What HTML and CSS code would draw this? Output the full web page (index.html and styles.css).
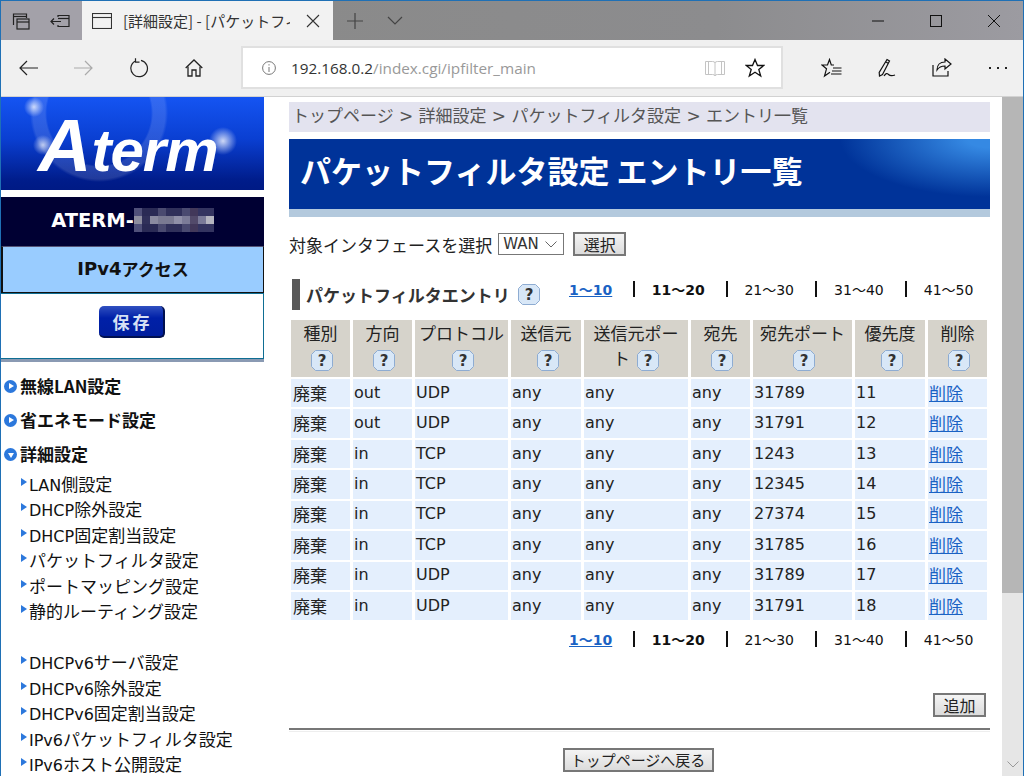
FILE: index.html
```html
<!DOCTYPE html>
<html lang="ja">
<head>
    <meta charset="UTF-8">
    <title>[詳細設定] - [パケットフィルタ設定 エントリ一覧]</title>
    <link rel="stylesheet" href="styles.css">
</head>
<body>
    <svg class="defs" width="0" height="0">
        <symbol id="help" viewBox="0 0 22 21">
            <path d="M4.500 .5h13l4 4v12l-4 4h-13l-4-4v-12z" fill="#d8e7f7" stroke="#8eacd2"/>
            <text x="11" y="16" text-anchor="middle" font-family="DejaVu Sans" font-weight="700" font-size="15" fill="#333">?</text>
        </symbol>
    </svg>
    <div class="window">
        <div class="titlebar">
            <div class="tab-tools">
                <svg class="ico" width="20" height="20" viewBox="0 0 20 20" fill="none" stroke="#222" stroke-width="1.2"><path d="M2.500 14V3h13v4"/><path d="M2.500 5.500h13"/><rect x="6" y="8" width="12" height="10"/><path d="M6 11h12"/></svg>
                <svg class="ico tool-gap" width="20" height="20" viewBox="0 0 20 20" fill="none" stroke="#222" stroke-width="1.2"><path d="M8 6V4.500h11v11H8V14"/><path d="M8 7.500h11"/><path d="M1 10.500h10M4 7.500l-3 3 3 3"/></svg>
            </div>
            <div class="tab">
                <svg width="20" height="16" viewBox="0 0 20 16" fill="none" stroke="#333" stroke-width="1.100"><rect x=".5" y=".5" width="19" height="15"/><path d="M.5 4.500h19"/></svg>
                <span class="tab-title">[詳細設定] - [パケットフィルタ設定 エントリ一覧]</span>
                <svg width="14" height="14" viewBox="0 0 14 14" stroke="#333" stroke-width="1.100"><path d="M1 1l12 12M13 1L1 13"/></svg>
            </div>
            <svg class="new-tab" width="16" height="16" viewBox="0 0 16 16" stroke="#444" stroke-width="1.200"><path d="M8 0v16M0 8h16"/></svg>
            <svg class="tab-menu" width="16" height="10" viewBox="0 0 16 10" fill="none" stroke="#444" stroke-width="1.200"><path d="M1 1l7 7 7-7"/></svg>
            <div class="win-controls">
                <svg width="12" height="2" viewBox="0 0 12 2" stroke="#111"><path d="M0 1h12"/></svg>
                <svg width="12" height="12" viewBox="0 0 12 12" fill="none" stroke="#111"><rect x=".5" y=".5" width="11" height="11"/></svg>
                <svg width="12" height="12" viewBox="0 0 12 12" stroke="#111"><path d="M0 0l12 12M12 0L0 12"/></svg>
            </div>
        </div>
        <div class="toolbar">
            <svg class="nav-back" width="20" height="16" viewBox="0 0 20 16" fill="none" stroke="#222" stroke-width="1.200"><path d="M19 8H1M8 1L1 8l7 7"/></svg>
            <svg class="nav-fwd" width="20" height="16" viewBox="0 0 20 16" fill="none" stroke="#aaa" stroke-width="1.200"><path d="M1 8h18M12 1l7 7-7 7"/></svg>
            <svg class="nav-reload" width="20" height="20" viewBox="0 0 20 20" fill="none" stroke="#222" stroke-width="1.200"><path d="M6 3.200a8.300 8.300 0 1 0 6-.9"/><path d="M6.500 .2v4h4"/></svg>
            <svg class="nav-home" width="18" height="18" viewBox="0 0 18 18" fill="none" stroke="#222" stroke-width="1.300"><path d="M.7 9L9 1l8.300 8"/><path d="M3 7.500V17h4v-6h4v6h4V7.500"/></svg>
            <div class="address">
                <svg width="14" height="14" viewBox="0 0 14 14" fill="none" stroke="#777"><circle cx="7" cy="7" r="6.400"/><path d="M7 6v5M7 3.200v1.300"/></svg>
                <span class="url">192.168.0.2<span class="url-path">/index.cgi/ipfilter_main</span></span>
                <svg class="read" width="20" height="18" viewBox="0 0 20 18" fill="none" stroke="#c4c4c4"><path d="M.5 2.500h7q2.500 0 2.500 1.500 0-1.500 2.500-1.500h7v13h-7q-2.500 0-2.500 1.500 0-1.500-2.500-1.500h-7zM10 4v13"/><path d="M3.500 2.500v13M16.500 2.500v13"/></svg>
                <svg class="star" width="20" height="20" viewBox="0 0 20 20" fill="none" stroke="#111" stroke-width="1.300"><path d="M10 1.500l2.500 6h6.300l-5 4 1.900 6.500-5.700-3.800L4.300 18l1.900-6.500-5-4h6.300z"/></svg>
            </div>
            <svg class="hub" width="21" height="20" viewBox="0 0 21 20" fill="none" stroke="#111" stroke-width="1.200"><path d="M13 7h-2.700L8.500 1.500 6.500 7H1l4.500 3.800L3.500 18l5.500-3.800"/><path d="M12 10h8.500M11 13h9.500M10 16h10.500"/></svg>
            <svg class="pen" width="19" height="20" viewBox="0 0 19 20" fill="none" stroke="#111" stroke-width="1.200"><path d="M10 1.500l2.500 1.500-7 13.500-3 1.500-.3-3.500zM9 4l2.500 1.500"/><path d="M7 18c2-3 3-3 4.500-1.500s3 1.800 6.500.5"/></svg>
            <svg class="share" width="20" height="19" viewBox="0 0 20 19" fill="none" stroke="#111" stroke-width="1.200"><path d="M1 7v11h15v-5"/><path d="M13 1l6 5-6 5V8c-4 0-6 1-8 4 0-5 3-8 8-8z"/></svg>
            <div class="dots"><i></i><i></i><i></i></div>
        </div>
        <div class="viewport">
            <div class="page">
                <div class="sidebar">
                    <div class="logo"><span class="logo-text"><span class="logo-a">A</span><span class="logo-rest">term</span></span></div>
                    <div class="host"><span class="lat-b">ATERM-</span><span class="mosaic"></span></div>
                    <div class="mode"><span class="lat-m">IPv4</span>アクセス</div>
                    <div class="save-box"><span class="save-btn">保存</span></div>
                    <ul class="menu">
                        <li class="menu-top"><span class="dot dot-right"></span>無線LAN設定</li>
                        <li class="menu-top"><span class="dot dot-right"></span>省エネモード設定</li>
                        <li class="menu-top"><span class="dot dot-down"></span>詳細設定</li>
                    </ul>
                    <ul class="submenu">
                        <li><span class="lat">LAN</span>側設定</li>
                        <li><span class="lat">DHCP</span>除外設定</li>
                        <li><span class="lat">DHCP</span>固定割当設定</li>
                        <li>パケットフィルタ設定</li>
                        <li>ポートマッピング設定</li>
                        <li>静的ルーティング設定</li>
                        <li class="blank"></li>
                        <li><span class="lat">DHCPv6</span>サーバ設定</li>
                        <li><span class="lat">DHCPv6</span>除外設定</li>
                        <li><span class="lat">DHCPv6</span>固定割当設定</li>
                        <li><span class="lat">IPv6</span>パケットフィルタ設定</li>
                        <li><span class="lat">IPv6</span>ホスト公開設定</li>
                    </ul>
                </div>
                <div class="main">
                    <div class="crumbs">トップページ <span class="sep">&gt;</span> 詳細設定 <span class="sep">&gt;</span> パケットフィルタ設定 <span class="sep">&gt;</span> エントリ一覧</div>
                    <h1>パケットフィルタ設定 エントリ一覧</h1>
                    <div class="if-row">
                        対象インタフェースを選択
                        <span class="select"><span class="lat-s">WAN</span><svg width="12" height="7" viewBox="0 0 12 7" fill="none" stroke="#666"><path d="M.5 .5L6 6 11.500 .5"/></svg></span>
                        <span class="btn btn-pick">選択</span>
                    </div>
                    <div class="section-row">
                        <h2>パケットフィルタエントリ <svg class="help" width="22" height="21"><use href="#help"/></svg></h2>
                        <div class="pager">
                            <a href="#">1～10</a><i></i><b>11～20</b><i></i><span>21～30</span><i></i><span>31～40</span><i></i><span>41～50</span>
                        </div>
                    </div>
                    <table class="entries">
                        <colgroup>
                            <col class="c1"><col class="c2"><col class="c3"><col class="c4"><col class="c5"><col class="c6"><col class="c7"><col class="c8"><col class="c9">
                        </colgroup>
                        <thead>
                            <tr>
                                <th>種別<br><svg class="help" width="22" height="21"><use href="#help"/></svg></th>
                                <th>方向<br><svg class="help" width="22" height="21"><use href="#help"/></svg></th>
                                <th>プロトコル<br><svg class="help" width="22" height="21"><use href="#help"/></svg></th>
                                <th>送信元<br><svg class="help" width="22" height="21"><use href="#help"/></svg></th>
                                <th>送信元ポート <svg class="help" width="22" height="21"><use href="#help"/></svg></th>
                                <th>宛先<br><svg class="help" width="22" height="21"><use href="#help"/></svg></th>
                                <th>宛先ポート<br><svg class="help" width="22" height="21"><use href="#help"/></svg></th>
                                <th>優先度<br><svg class="help" width="22" height="21"><use href="#help"/></svg></th>
                                <th>削除<br><svg class="help" width="22" height="21"><use href="#help"/></svg></th>
                            </tr>
                        </thead>
                        <tbody>
                            <tr><td class="ja">廃棄</td><td>out</td><td>UDP</td><td>any</td><td>any</td><td>any</td><td>31789</td><td>11</td><td class="ja"><a href="#">削除</a></td></tr>
                            <tr><td class="ja">廃棄</td><td>out</td><td>UDP</td><td>any</td><td>any</td><td>any</td><td>31791</td><td>12</td><td class="ja"><a href="#">削除</a></td></tr>
                            <tr><td class="ja">廃棄</td><td>in</td><td>TCP</td><td>any</td><td>any</td><td>any</td><td>1243</td><td>13</td><td class="ja"><a href="#">削除</a></td></tr>
                            <tr><td class="ja">廃棄</td><td>in</td><td>TCP</td><td>any</td><td>any</td><td>any</td><td>12345</td><td>14</td><td class="ja"><a href="#">削除</a></td></tr>
                            <tr><td class="ja">廃棄</td><td>in</td><td>TCP</td><td>any</td><td>any</td><td>any</td><td>27374</td><td>15</td><td class="ja"><a href="#">削除</a></td></tr>
                            <tr><td class="ja">廃棄</td><td>in</td><td>TCP</td><td>any</td><td>any</td><td>any</td><td>31785</td><td>16</td><td class="ja"><a href="#">削除</a></td></tr>
                            <tr><td class="ja">廃棄</td><td>in</td><td>UDP</td><td>any</td><td>any</td><td>any</td><td>31789</td><td>17</td><td class="ja"><a href="#">削除</a></td></tr>
                            <tr><td class="ja">廃棄</td><td>in</td><td>UDP</td><td>any</td><td>any</td><td>any</td><td>31791</td><td>18</td><td class="ja"><a href="#">削除</a></td></tr>
                        </tbody>
                    </table>
                    <div class="pager pager-bottom">
                        <a href="#">1～10</a><i></i><b>11～20</b><i></i><span>21～30</span><i></i><span>31～40</span><i></i><span>41～50</span>
                    </div>
                    <div class="add-row"><span class="btn btn-add">追加</span></div>
                    <div class="rule"></div>
                    <div class="back-row"><span class="btn btn-back">トップページへ戻る</span></div>
                </div>
            </div>
            <div class="scrollbar">
                <div class="thumb"></div>
                <svg width="12" height="7" viewBox="0 0 12 7" fill="none" stroke="#999"><path d="M.5 .5L6 6 11.500 .5"/></svg>
            </div>
        </div>
    </div>
</body>
</html>
```

FILE: styles.css
```css
* {
    box-sizing: border-box;
}
html, body {
    margin: 0;
    height: 776px;
    overflow: hidden;
}
body {
    font-family: "Noto Sans CJK JP", sans-serif;
    font-size: 17px;
    color: #111;
    background-color: #fff;
}
.defs {
    position: absolute;
}
.window {
    height: 776px;
    display: flex;
    flex-direction: column;
    border: 1px solid #1f70b5;
    border-bottom: none;
}

/* browser chrome */
.titlebar {
    height: 39px;
    flex: none;
    display: flex;
    align-items: center;
    background: linear-gradient(90deg, #8a8a8a 30%, #8c8c8e 70%, #9c9ba1);
}
.tab-tools {
    width: 81px;
    height: 39px;
    display: flex;
    align-items: center;
    padding-left: 10px;
    background-color: #a3a1a9;
}
.tool-gap {
    margin-left: 19px;
}
.tab {
    width: 251px;
    height: 39px;
    display: flex;
    align-items: center;
    padding-left: 10px;
    background-color: #f2f2f2;
    font-size: 15px;
    color: #333;
}
.tab-title {
    width: 167px;
    margin-left: 11px;
    margin-right: 16px;
    white-space: nowrap;
    overflow: hidden;
}
.new-tab {
    margin-left: 14px;
}
.tab-menu {
    margin-left: 24px;
}
.win-controls {
    margin-left: auto;
    margin-right: 23px;
    display: flex;
    align-items: center;
    gap: 46px;
}
.toolbar {
    height: 57px;
    flex: none;
    display: flex;
    align-items: center;
    padding-bottom: 1px;
    background-color: #f0f0f0;
    border-bottom: 1px solid #d2d2d2;
}
.nav-back {
    margin-left: 18px;
}
.nav-fwd {
    margin-left: 34px;
}
.nav-reload {
    margin-left: 36px;
}
.nav-home {
    margin-left: 36px;
}
.address {
    width: 542px;
    height: 43px;
    margin-left: 38px;
    display: flex;
    align-items: center;
    padding-left: 19px;
    background-color: #fff;
    border: 2px solid #e0e0e0;
}
.url {
    margin-left: 15px;
    font-family: "Open Sans", sans-serif;
    font-size: 15.300px;
    color: #333;
}
.url-path {
    color: #999;
}
.read {
    margin-left: auto;
}
.star {
    margin-left: 20px;
    margin-right: 16px;
}
.hub {
    margin-left: 38px;
}
.pen {
    margin-left: 35px;
}
.share {
    margin-left: 36px;
}
.dots {
    margin-left: 37px;
    display: flex;
    gap: 6px;
}
.dots i {
    width: 2px;
    height: 2px;
    background-color: #222;
}

/* page area */
.viewport {
    flex: 1;
    min-height: 0;
    display: flex;
}
.page {
    flex: 1;
    min-width: 0;
    display: flex;
    overflow: hidden;
}
.scrollbar {
    width: 21px;
    flex: none;
    display: flex;
    flex-direction: column;
    align-items: center;
    background-color: #e6e6e6;
}
.thumb {
    width: 100%;
    height: 496px;
    background-color: #b6b6b6;
}
.scrollbar svg {
    margin-top: auto;
    margin-bottom: 8px;
}

/* side menu */
.sidebar {
    width: 263px;
    flex: none;
}
.logo {
    height: 93px;
    display: flex;
    align-items: flex-end;
    padding-left: 37px;
    background:
        radial-gradient(circle at 33px 10px, rgba(255,255,255,.75), rgba(255,255,255,0) 10px),
        radial-gradient(circle at 42px 48px, rgba(255,255,255,.7), rgba(255,255,255,0) 10px),
        radial-gradient(circle at 222px 44px, rgba(255,255,255,.8), rgba(255,255,255,0) 14px),
        radial-gradient(circle at 98px 16px, rgba(255,255,255,0) 52px, rgba(255,255,255,.13) 54px, rgba(255,255,255,.13) 66px, rgba(255,255,255,0) 69px),
        linear-gradient(180deg, #1554f2, #0a3fd2 45%, #001c8a 90%, #001a85);
}
.logo-text {
    height: 78px;
    margin-bottom: 5px;
    font-family: "Liberation Sans", sans-serif;
    font-weight: 700;
    font-style: italic;
    font-size: 60px;
    line-height: 78px;
    color: #fff;
    white-space: nowrap;
}
.logo-a {
    font-size: 74px;
}
.logo-rest {
    letter-spacing: -1px;
}
.host {
    height: 49px;
    margin-top: 7px;
    padding-bottom: 3px;
    display: flex;
    align-items: center;
    justify-content: center;
    background-color: #000033;
    color: #fff;
}
.lat-b {
    font-family: "DejaVu Sans", sans-serif;
    font-weight: 700;
    font-size: 19.500px;
}
.mosaic {
    width: 80px;
    height: 24px;
    background-color: #1a1a44;
    background-image:
        linear-gradient(90deg, #8d8d9f 0 8px, #30305a 8px 16px, #8a8aa0 16px 24px, #7a7a92 24px 40px, #9090a8 40px 48px, #7c7c98 48px 56px, #524a6a 56px 64px, #7a7a98 64px 72px, #b5b5c0 72px 80px),
        linear-gradient(90deg, #50507a 0 8px, #2a2a55 8px 24px, #4a4a70 24px 32px, #30305a 32px 48px, #4a4a70 48px 56px, #42385a 56px 64px, #343460 64px 80px);
    background-size: 80px 8px, 80px 24px;
    background-position: 0 8px, 0 0;
    background-repeat: no-repeat;
}
.mode {
    height: 47px;
    padding-bottom: 2px;
    display: flex;
    align-items: center;
    justify-content: center;
    background-color: #99ccff;
    border: 1px solid #111;
    border-left-width: 2px;
    border-top-color: #557;
    font-weight: 700;
}
.lat-m {
    font-family: "DejaVu Sans", sans-serif;
    font-weight: 700;
    font-size: 18px;
}
.save-box {
    height: 66px;
    display: flex;
    justify-content: center;
    padding-top: 12px;
    border: 1px solid #0f6e93;
    border-left: none;
    box-shadow: 0 1px 0 #8a9ab3, 0 2px 0 #8a9ab3, 0 3px 0 #8a9ab3;
}
.save-btn {
    width: 66px;
    height: 32px;
    display: flex;
    align-items: center;
    justify-content: center;
    letter-spacing: 3px;
    padding-left: 3px;
    font-weight: 700;
    font-size: 17px;
    color: #d6e0f4;
    background: linear-gradient(180deg, #3050c0, #0020a8 40%, #001e9e);
    border-radius: 5px;
    border-right: 2px solid #001050;
    border-bottom: 2px solid #001050;
}
.menu {
    list-style: none;
    margin: 0;
    padding: 10px 0 0 3px;
}
.menu-top {
    height: 34px;
    line-height: 26px;
    display: flex;
    align-items: center;
    font-weight: 700;
}
.dot {
    width: 13px;
    height: 13px;
    flex: none;
    margin-right: 3px;
    border-radius: 50%;
    background-color: #2c78dc;
    display: flex;
    align-items: center;
    justify-content: center;
}
.dot::after {
    content: "";
    border-style: solid;
    border-color: transparent;
}
.dot-right::after {
    margin-left: 2px;
    border-width: 3px 0 3px 5px;
    border-left-color: #fff;
}
.dot-down::after {
    margin-top: 2px;
    border-width: 5px 3px 0 3px;
    border-top-color: #fff;
}
.submenu {
    list-style: none;
    margin: 0;
    padding: 0 0 0 20px;
}
.submenu li {
    position: relative;
    height: 25.400px;
    line-height: 25px;
    padding-left: 8px;
    white-space: nowrap;
}
.submenu li::before {
    content: "";
    position: absolute;
    left: 0;
    top: 7px;
    border-style: solid;
    border-color: transparent;
    border-width: 4px 0 4px 6px;
    border-left-color: #2c78dc;
}
.submenu li.blank::before {
    display: none;
}
.submenu li.blank {
    height: 26px;
}
.lat {
    font-family: "DejaVu Sans", sans-serif;
    font-size: 16px;
}

/* main column */
.main {
    width: 701px;
    margin-left: 25px;
    padding-top: 5px;
}
.crumbs {
    height: 30px;
    line-height: 26px;
    padding-left: 3px;
    background-color: #e3e3ef;
    color: #555;
    word-spacing: 1.500px;
}
.sep {
    font-family: "DejaVu Sans", sans-serif;
}
h1 {
    height: 78px;
    margin: 7px 0 0;
    padding-left: 11px;
    line-height: 62px;
    font-size: 31px;
    font-weight: 700;
    color: #fff;
    background:
        radial-gradient(ellipse 150px 58px at 100% 0, #3589e3 15%, rgba(53,137,227,0)) 0 0 / 100% 70px no-repeat,
        linear-gradient(180deg, #003399 70px, #b3c9dd 70px);
}
.if-row {
    height: 26px;
    margin-top: 14px;
    display: flex;
    align-items: center;
    color: #222;
}
.select {
    width: 66px;
    height: 22px;
    margin-left: 6px;
    padding: 0 6px 0 4px;
    display: flex;
    align-items: center;
    justify-content: space-between;
    border: 1px solid #777;
}
.lat-s {
    font-family: "DejaVu Sans", sans-serif;
    font-size: 15px;
    color: #333;
}
.btn {
    height: 24px;
    display: flex;
    align-items: center;
    justify-content: center;
    font-size: 16px;
    color: #222;
    background: linear-gradient(180deg, #f4f4f4, #dcdcdc);
    border: 2px solid #777;
}
.btn-pick {
    width: 53px;
    margin-left: 9px;
}
.section-row {
    height: 31px;
    margin-top: 22px;
    margin-left: 3px;
    display: flex;
}
h2 {
    width: 277px;
    margin: 0;
    padding-left: 6px;
    display: flex;
    align-items: center;
    gap: 8px;
    font-size: 17px;
    font-weight: 700;
    color: #333;
    border-left: 8px solid #595959;
    white-space: nowrap;
}
.help {
    vertical-align: middle;
}
.pager {
    display: flex;
    align-items: center;
    height: 20px;
    font-family: "DejaVu Sans", "Noto Sans CJK JP", sans-serif;
    font-size: 14px;
    white-space: nowrap;
}
.pager span {
    width: 50px;
}
.pager b {
    width: 53px;
}
.pager a {
    width: 43px;
    font-weight: 700;
    color: #1a62c4;
}
.pager i {
    width: 2px;
    height: 16px;
    margin: 0 16.700px 0 21px;
    background-color: #111;
}
.pager-bottom {
    margin-top: 7px;
    margin-left: 280px;
}

/* entries table */
.entries {
    width: 702px;
    margin-top: 8px;
    margin-left: -1px;
    table-layout: fixed;
    border-collapse: separate;
    border-spacing: 3px 2px;
}
.c1, .c2 { width: 59px; }
.c3 { width: 93px; }
.c4 { width: 70px; }
.c5 { width: 104px; }
.c6 { width: 59px; }
.c7 { width: 99px; }
.c8 { width: 70px; }
.c9 { width: 59px; }
th {
    height: 57px;
    padding: 0 2px;
    font-weight: 400;
    line-height: 25px;
    text-align: center;
    vertical-align: top;
    background-color: #d6d3cb;
    color: #222;
}
th .help {
    margin-left: 3px;
}
td {
    height: 28.430px;
    padding: 0 2px 1px 1px;
    font-family: "DejaVu Sans", sans-serif;
    font-size: 16px;
    line-height: 26px;
    background-color: #e4effd;
    color: #222;
}
td.ja {
    padding-left: 2px;
    font-family: "Noto Sans CJK JP", sans-serif;
    font-size: 17px;
}
td a {
    margin-left: -1px;
    color: #1a62c4;
}
.add-row {
    height: 24px;
    margin-top: 44px;
    display: flex;
    justify-content: flex-end;
    padding-right: 4px;
}
.btn-add {
    width: 53px;
}
.rule {
    height: 4px;
    margin-top: 11px;
    border-top: 2px solid #777;
    border-bottom: 1px solid #eee;
}
.back-row {
    margin-top: 16px;
    display: flex;
    justify-content: center;
    padding-right: 3px;
}
.btn-back {
    width: 151px;
    padding-bottom: 1px;
    font-size: 15px;
}
```
